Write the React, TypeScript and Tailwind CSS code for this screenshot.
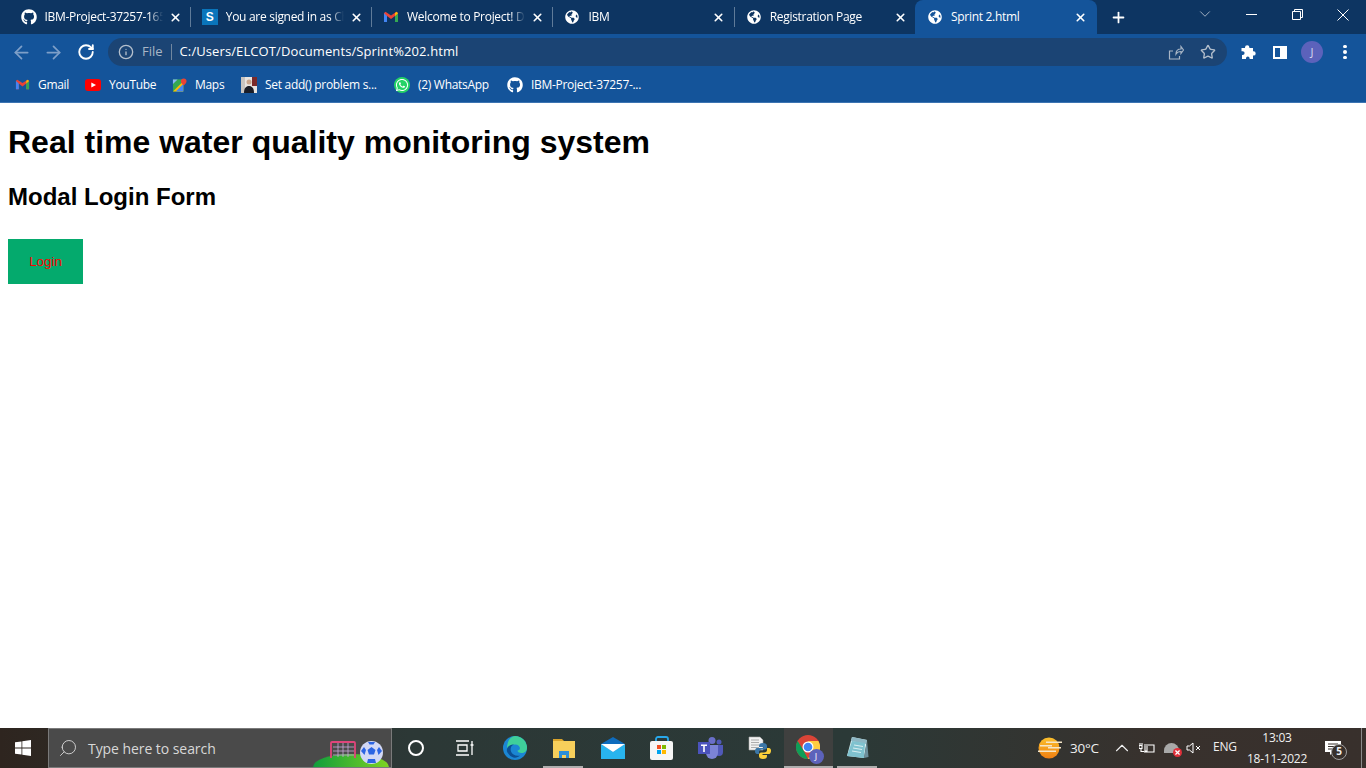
import { ArrowLeft, ArrowRight, RotateCw, Info, Star, Plus, X, ChevronDown, ChevronUp, Search } from "lucide-react";
import { FaGithub, FaWhatsapp, FaGlobeAmericas } from "react-icons/fa";

const uiFont = "[font-family:'Open_Sans','Noto_Sans',sans-serif]";

function GmailIcon({ size = 16 }: { size?: number }) {
  return (
    <svg width={size} height={size} viewBox="0 0 16 16" className="shrink-0">
      <path d="M1 4v9h3V7l4 3 4-3v6h3V4l-1.500-1.200L8 6.500 2.500 2.800z" fill="#ea4335" />
      <path d="M1 4.200V13h3V7z" fill="#4285f4" />
      <path d="M15 4.200V13h-3V7z" fill="#34a853" />
      <path d="M12 7l3-2.800-1.500-1.400L12 4z" fill="#fbbc04" />
    </svg>
  );
}

function StackIcon() {
  return (
    <div className="w-4 h-4 bg-[#0a75bb] flex items-center justify-center text-white text-[12px] font-bold leading-none shrink-0 [font-family:'Liberation_Sans',sans-serif]">
      S
    </div>
  );
}

type TabInfo = { title: string; icon: React.ReactNode };

const tabs: TabInfo[] = [
  { title: "IBM-Project-37257-1659", icon: <FaGithub className="w-4 h-4 text-white" /> },
  { title: "You are signed in as Chan", icon: <StackIcon /> },
  { title: "Welcome to Project! Dash", icon: <GmailIcon /> },
  { title: "IBM", icon: <FaGlobeAmericas className="w-[14px] h-[14px] mx-px text-white" /> },
  { title: "Registration Page", icon: <FaGlobeAmericas className="w-[14px] h-[14px] mx-px text-white" /> },
];

function Tab({ tab, last }: { tab: TabInfo; last?: boolean }) {
  return (
    <div className="w-[181.300px] h-[34px] flex items-center pl-3 text-white relative">
      <div className="w-4 flex justify-center shrink-0">{tab.icon}</div>
      <div className="ml-2 w-[118px] overflow-hidden whitespace-nowrap text-[12px] tracking-[-0.3px] [mask-image:linear-gradient(to_right,black_88%,transparent)]">
        {tab.title}
      </div>
      <X className="w-[13px] h-[13px] ml-[6px] shrink-0" strokeWidth={3} />
      {!last && <div className="absolute -right-px top-[7px] w-px h-5 bg-[#5f7b99]" />}
    </div>
  );
}

function MapsIcon() {
  return (
    <svg width="15" height="16" viewBox="0 0 16 16" className="shrink-0">
      <path d="M1 2h11v13H1z" fill="#34a853" />
      <path d="M1 15L12 4v11z" fill="#fbbc04" />
      <path d="M4 15l8-8v8z" fill="#4285f4" />
      <path d="M1 2h5L1 7z" fill="#8ab4f8" />
      <path d="M12.500 1a3 3 0 0 0-3 3c0 2 3 4.500 3 4.500s3-2.500 3-4.500a3 3 0 0 0-3-3z" fill="#ea4335" />
    </svg>
  );
}

function YoutubeIcon() {
  return (
    <svg width="16" height="12" viewBox="0 0 16 12" className="shrink-0">
      <rect width="16" height="12" rx="3" fill="#f00" />
      <path d="M6.300 3.400L11 6 6.300 8.600z" fill="#fff" />
    </svg>
  );
}

function PhotoIcon() {
  return (
    <svg width="16" height="16" viewBox="0 0 16 16" className="shrink-0">
      <rect width="16" height="16" fill="#e8e4e0" />
      <rect x="11" width="5" height="9" fill="#7a2a2a" />
      <rect width="4" height="16" fill="#c8c4c0" />
      <circle cx="8" cy="5" r="2.500" fill="#c9a58c" />
      <path d="M3 16c0-5 2-7 5-7s5 2 5 7z" fill="#1b1d26" />
    </svg>
  );
}

function WhatsappIcon() {
  return (
    <div className="w-4 h-4 rounded-full bg-[#25d366] flex items-center justify-center shrink-0">
      <FaWhatsapp className="w-[14px] h-[14px] text-white" />
    </div>
  );
}

const bookmarks = [
  { label: "Gmail", icon: <GmailIcon size={15} />, width: "w-[70px]" },
  { label: "YouTube", icon: <YoutubeIcon />, width: "w-[87px]" },
  { label: "Maps", icon: <MapsIcon />, width: "w-[69px]" },
  { label: "Set add() problem s...", icon: <PhotoIcon />, width: "w-[153px]" },
  { label: "(2) WhatsApp", icon: <WhatsappIcon />, width: "w-[113px]" },
  { label: "IBM-Project-37257-...", icon: <FaGithub className="w-4 h-4 text-white shrink-0" />, width: "w-[140px]" },
];

function Chrome() {
  return (
    <div className={uiFont}>
      {/* Tab strip */}
      <div className="h-[34px] bg-[#0d3562] flex pl-[8.500px] items-start">
        {tabs.map((t, i) => (
          <Tab key={t.title} tab={t} last={i === tabs.length - 1} />
        ))}
        <div className="w-[182px] h-[34px] bg-[#14549a] rounded-t-lg flex items-center pl-3 pr-[10px] text-white">
          <FaGlobeAmericas className="w-[14px] h-[14px] mx-px shrink-0" />
          <div className="ml-2 flex-1 text-[12px] tracking-[-0.3px] whitespace-nowrap">Sprint 2.html</div>
          <X className="w-[13px] h-[13px] shrink-0" strokeWidth={3} />
        </div>
        <div className="w-[44px] h-[34px] flex items-center justify-center text-white">
          <Plus className="w-[17px] h-[17px]" strokeWidth={2.500} />
        </div>
        <div className="flex-1 flex justify-end items-start text-white">
          <ChevronDown className="w-[18px] h-[18px] mt-[5px] mr-[14px] opacity-80" strokeWidth={1} />
          <div className="w-[46px] h-[29px] flex items-center justify-center">
            <div className="w-[11px] h-px bg-white" />
          </div>
          <div className="w-[46px] h-[29px] flex items-center justify-center">
            <svg width="11" height="11" viewBox="0 0 11 11" fill="none" stroke="#fff" strokeWidth="1">
              <path d="M.5 2.500h8v8h-8zM2.500 2.500v-2h8v8h-2" />
            </svg>
          </div>
          <div className="w-[46px] h-[29px] flex items-center justify-center">
            <svg width="12" height="12" viewBox="0 0 12 12" stroke="#fff" strokeWidth="1">
              <path d="M.5.5l11 11M11.500.5l-11 11" />
            </svg>
          </div>
        </div>
      </div>

      {/* Toolbar */}
      <div className="h-9 bg-[#14549a] flex items-center text-white">
        <div className="w-[108px] flex items-center">
          <ArrowLeft className="w-[21px] h-[21px] ml-[11px] text-[#7e9fc8]" strokeWidth={2} />
          <ArrowRight className="w-[21px] h-[21px] ml-[11px] text-[#7e9fc8]" strokeWidth={2} />
          <RotateCw className="w-[18px] h-[18px] ml-[13px]" strokeWidth={2.500} />
        </div>
        <div className="w-[1119px] h-7 rounded-full bg-[#1b4474] flex items-center text-[13px]">
          <Info className="w-4 h-4 ml-[10px] text-[#b4bfcc]" strokeWidth={2} />
          <span className="ml-2 text-[#a9b6c6]">File</span>
          <div className="w-px h-[16px] bg-[#71879f] ml-2" />
          <span className="ml-2 tracking-[0.1px] flex-1 whitespace-nowrap">C:/Users/ELCOT/Documents/Sprint%202.html</span>
          <svg width="16" height="16" viewBox="0 0 16 16" fill="none" stroke="#a9b6c6" strokeWidth="1.200" className="mr-4">
            <path d="M5 7H1.500v8h10v-3M8 10c0-3 2-5 5-5V2.500L15.500 6 13 9.500V7.500c-2 0-4 .8-5 2.500z" />
          </svg>
          <Star className="w-4 h-4 mr-[11px] text-[#b4bfcc]" strokeWidth={2} />
        </div>
        <svg width="16" height="16" viewBox="0 0 16 16" fill="#fff" className="ml-[13px]">
          <path d="M5 3.500a2.200 2.200 0 0 1 4.400 0V4h3.600v3.200h.5a2.200 2.200 0 0 1 0 4.400H13V15H9.600v-.8a1.800 1.800 0 0 0-3.600 0v.8H2v-4h.7a1.900 1.900 0 0 0 0-3.800H1.500V4H5z" />
        </svg>
        <div className="w-[14px] h-[13px] border-2 border-white ml-[17px] flex justify-end">
          <div className="w-[5px] h-full bg-white" />
        </div>
        <div className="w-[22px] h-[22px] rounded-full bg-[#5c62bb] ml-[14px] flex items-center justify-center text-[11px] text-[#d8daf0]">J</div>
        <div className="ml-[20px] flex flex-col gap-[2px]">
          <div className="w-[3.500px] h-[3.500px] rounded-full bg-white" />
          <div className="w-[3.500px] h-[3.500px] rounded-full bg-white" />
          <div className="w-[3.500px] h-[3.500px] rounded-full bg-white" />
        </div>
      </div>

      {/* Bookmarks */}
      <div className="h-[33px] bg-[#14549a] border-b border-[#3c74b2] flex items-center pl-[15px] pb-[3px] text-white text-[12px] tracking-[-0.3px]">
        {bookmarks.map((b) => (
          <div key={b.label} className={`${b.width} flex items-center gap-2 whitespace-nowrap`}>
            {b.icon}
            <span>{b.label}</span>
          </div>
        ))}
      </div>
    </div>
  );
}

function EdgeIcon() {
  return (
    <svg width="24" height="24" viewBox="0 0 24 24">
      <circle cx="12" cy="12" r="12" fill="#1b86d3" />
      <path d="M12 0a12 12 0 0 1 12 12c0 3-2.500 5-5.500 5-2.500 0-4-1-4-2.500 4 0 3-6-2.500-6-3 0-6 1.500-8 4C4 5 7.500 0 12 0z" fill="#3fcf9a" />
      <path d="M4 13c1-3 4-5 7-4.500-3 1-4 4-3 7 1 3 5 5 9 4-3 3-8 3-11-1-2-2-2.500-3.500-2-5.500z" fill="#0c4f93" />
    </svg>
  );
}

function ExplorerIcon() {
  return (
    <svg width="22" height="20" viewBox="0 0 22 20">
      <path d="M0 1h9l2 2h-11z" fill="#d9a32b" />
      <rect y="3" width="22" height="17" fill="#f7cf5b" />
      <path d="M6 20v-7h10v7h-3v-3H9v3z" fill="#2c8fd8" />
    </svg>
  );
}

function MailIcon() {
  return (
    <svg width="24" height="22" viewBox="0 0 24 22">
      <path d="M12 0l12 7v15H0V7z" fill="#0f6cbd" />
      <path d="M0 7l12 8 12-8v15H0z" fill="#28b4ee" />
      <path d="M0 7h24l-12 8z" fill="#fff" />
    </svg>
  );
}

function StoreIcon() {
  return (
    <svg width="24" height="24" viewBox="0 0 24 24">
      <path d="M6 6V3a2 2 0 0 1 2-2h8a2 2 0 0 1 2 2v3" fill="none" stroke="#28a8ea" strokeWidth="1.800" />
      <rect y="5" width="23" height="19" rx="2" fill="#f6f6f6" />
      <rect x="7" y="9" width="4" height="4" fill="#f25022" />
      <rect x="12" y="9" width="4" height="4" fill="#7fba00" />
      <rect x="7" y="14" width="4" height="4" fill="#00a4ef" />
      <rect x="12" y="14" width="4" height="4" fill="#ffb900" />
    </svg>
  );
}

function TeamsIcon() {
  return (
    <svg width="25" height="22" viewBox="0 0 25 22">
      <circle cx="14" cy="3.500" r="3.500" fill="#6a6fc9" />
      <circle cx="21" cy="5" r="2.500" fill="#5059b8" />
      <path d="M17 8h8v7a4 4 0 0 1-8 0z" fill="#5059b8" />
      <path d="M8 8h12v8a6 6 0 0 1-12 0z" fill="#7b83d6" />
      <rect y="5" width="12" height="12" fill="#4b53bc" />
      <path d="M3 7.500h6v1.500H6.800v6H5.200V9H3z" fill="#fff" />
    </svg>
  );
}

function PythonIcon() {
  return (
    <svg width="24" height="24" viewBox="0 0 24 24">
      <path d="M1 1h11l3 3v10H1z" fill="#f2f2f2" stroke="#a8a8a8" strokeWidth="0.600" />
      <path d="M3 4h8M3 6.500h8M3 9h8M3 11.500h8" stroke="#9a9a9a" strokeWidth="0.800" />
      <path d="M15 7c-3 0-4 1-4 3v1h4.500v1H9c-1.500 0-2 2-2 3.500S8 18 9 18h2v-2c0-1.500 1-2.500 3-2.500h3c1 0 2-1 2-2V10c0-2-1.500-3-4-3z" fill="#3b77a8" />
      <path d="M15 23c3 0 4-1 4-3v-1h-4.500v-1H21c1.500 0 2-2 2-3.500S22 12 21 12h-2v2c0 1.500-1 2.500-3 2.500h-3c-1 0-2 1-2 2V20c0 2 1.500 3 4 3z" fill="#fdd13a" />
    </svg>
  );
}

function ChromeIcon() {
  return (
    <div className="relative w-[26px] h-[26px]">
      <svg width="24" height="24" viewBox="0 0 24 24">
        <circle cx="12" cy="12" r="12" fill="#db4437" />
        <path d="M12 24A12 12 0 0 1 1.600 6L7 14.500l5 9.500z" fill="#0f9d58" />
        <path d="M12 24a12 12 0 0 0 10.400-18H12l4.500 8z" fill="#ffcd40" />
        <circle cx="12" cy="12" r="5.500" fill="#fff" />
        <circle cx="12" cy="12" r="4.300" fill="#4285f4" />
      </svg>
      <div className="absolute -right-[2px] -bottom-[3px] w-[15px] h-[15px] rounded-full bg-[#5c62bb] text-[9px] text-white flex items-center justify-center">J</div>
    </div>
  );
}

function NotepadIcon() {
  return (
    <svg width="24" height="24" viewBox="0 0 24 24">
      <path d="M6 1l15 3-3 18-17-2z" fill="#d8eef0" />
      <path d="M6 1l15 3-1 4-15-3z" fill="#8eb7c4" />
      <path d="M1 20L6 5l13 2-1 15z" fill="#7fc2cf" />
      <path d="M8 9l9 1.500M7 12l9 1.500M6 15l9 1.500" stroke="#f0fafa" strokeWidth="0.800" />
      <path d="M18 22l3-18 1.500 17z" fill="#6d8f9c" />
    </svg>
  );
}

function WeatherIcon() {
  return (
    <svg width="24" height="22" viewBox="0 0 24 22" className="mr-2 shrink-0">
      <defs>
        <linearGradient id="sun" x1="0" y1="0" x2="0" y2="1">
          <stop offset="0" stopColor="#fbc02d" />
          <stop offset="1" stopColor="#ef7f12" />
        </linearGradient>
      </defs>
      <circle cx="11" cy="11" r="10.500" fill="url(#sun)" />
      <path d="M8 4.500h16v1.500H8zM2 8h12v1.500H2zM10 10h13v1.500H10zM0 13.500h18v1.500H0z" fill="#f5e6c8" />
    </svg>
  );
}

function Taskbar() {
  const itemCls = "w-[49px] h-10 flex items-center justify-center relative";
  return (
    <div className={`h-10 flex items-stretch text-white ${uiFont} bg-[linear-gradient(to_right,#2e251f_0%,#2c3836_30%,#2b3937_62%,#38312d_85%,#38302c_100%)]`}>
      <div className="w-12 flex items-center justify-center pr-[2px]">
        <svg width="16" height="16" viewBox="0 0 16 16" fill="#fff">
          <path d="M0 2.300l6.500-.9v6.200H0zM7.300 1.300L16 0v7.600H7.300zM0 8.400h6.500v6.200L0 13.700zM7.300 8.400H16V16l-8.700-1.200z" />
        </svg>
      </div>
      <div className="w-[344px] bg-[#4a4a4a] border border-[#7a7a7a] relative overflow-hidden flex items-center text-[14px] text-[#d8d8d8]">
        <Search className="w-5 h-5 ml-[9px] -scale-x-100" strokeWidth={1.100} />
        <span className="ml-[10px] tracking-[-0.06px]">Type here to search</span>
        {/* Search highlight doodle */}
        <div className="absolute left-[264px] -bottom-[13px] w-[76px] h-[26px] rounded-[50%] bg-[linear-gradient(to_right,#0f9d3c,#7ed321)]" />
        <svg width="26" height="18" viewBox="0 0 26 18" fill="none" className="absolute left-[281px] top-[12px]">
          <path d="M1 17V2q0-1 1-1h22q1 0 1 1v15" stroke="#e0457b" strokeWidth="1.800" />
          <path d="M3 6h21M3 10h21M3 14h21M8 2v14M13 2v14M18 2v14" stroke="#c9a8d8" strokeWidth="0.800" />
        </svg>
        <svg width="23" height="23" viewBox="0 0 23 23" className="absolute left-[311px] top-[12px]">
          <circle cx="11.500" cy="11.500" r="11.500" fill="#d3d8f5" />
          <path d="M11.500 6l4 3-1.500 4.500H9L7.500 9zM1 10l3-4 2 3-1.500 5zM22 10l-3-4-2 3 1.500 5zM8 1h7l-1.500 2.500h-4zM7 22l1-4h7l1 4z" fill="#2c64e3" />
        </svg>
      </div>
      <div className={`${itemCls} pr-[2px]`}>
        <div className="w-4 h-4 rounded-full border-2 border-white" />
      </div>
      <div className={`${itemCls} pr-[2px]`}>
        <svg width="18" height="16" viewBox="0 0 18 16" fill="none" stroke="#fff" strokeWidth="1.300">
          <path d="M0 1h13M2 5h9v6H2zM0 15h13M16 1v14M14.500 5h3" />
        </svg>
      </div>
      <div className={itemCls}><EdgeIcon /></div>
      <div className={itemCls}>
        <ExplorerIcon />
        <div className="absolute bottom-0 left-[4px] w-10 h-[2px] bg-[#aeaeae]" />
      </div>
      <div className={itemCls}><MailIcon /></div>
      <div className={itemCls}><StoreIcon /></div>
      <div className={itemCls}><TeamsIcon /></div>
      <div className={itemCls}><PythonIcon /></div>
      <div className={`${itemCls} bg-[#3f403f]`}>
        <ChromeIcon />
        <div className="absolute bottom-0 inset-x-0 h-[2px] bg-[#aeaeae]" />
      </div>
      <div className={itemCls}>
        <NotepadIcon />
        <div className="absolute bottom-0 left-[4px] w-10 h-[2px] bg-[#aeaeae]" />
      </div>

      {/* Tray */}
      <div className="flex-1 flex items-center justify-end text-[#f0f0f0]">
        <WeatherIcon />
        <span className="text-[13.500px] w-[41px] shrink-0 tracking-[-0.2px]">30°C</span>
        <ChevronUp className="w-[22px] h-[22px] mr-[6px] shrink-0" strokeWidth={1.200} />
        <svg width="16" height="12" viewBox="0 0 16 12" fill="none" stroke="#fff" strokeWidth="1.100" className="mr-[9px] shrink-0">
          <path d="M5 3h10v7H5M0 3.500h3v3H0zM1 1v2.500M3 1v2.500M2 6.500v3h3M6 4v5h2V4" />
        </svg>
        <div className="relative w-[15px] h-[10px] rounded-t-full bg-[#a8a8a8] mr-[7px] shrink-0">
          <div className="absolute -right-[3px] -bottom-[4px] w-[9px] h-[9px] rounded-full bg-[#e0303a] flex items-center justify-center">
            <X className="w-[7px] h-[7px] text-white" strokeWidth={4} />
          </div>
        </div>
        <svg width="16" height="12" viewBox="0 0 16 12" fill="none" stroke="#fff" strokeWidth="1" className="mr-[11px] shrink-0">
          <path d="M1 4h2.500L7 1v10L3.500 8H1zM10 4l4 4M14 4l-4 4" />
        </svg>
        <span className="text-[12px] w-[34px] shrink-0 tracking-[-0.2px] -mt-[2px]">ENG</span>
        <div className="w-[60px] shrink-0 flex flex-col items-center text-[12px] leading-[21px] tracking-[-0.25px] whitespace-nowrap">
          <span>13:03</span>
          <span>18-11-2022</span>
        </div>
        <div className="w-[54px] shrink-0 flex justify-center relative pr-[2px]">
          <svg width="16" height="15" viewBox="0 0 16 15" fill="#fff">
            <path d="M0 0h16v11H8l-3 3v-3H0z" />
            <path d="M3 3h10M3 5.500h10M3 8h10" stroke="#38302c" strokeWidth="1" />
          </svg>
          <div className="absolute left-[24px] top-[3px] w-4 h-4 rounded-full border border-[#a0a0a0] bg-[#38302c] text-[10px] font-bold flex items-center justify-center">5</div>
        </div>
        <div className="w-[5px] h-full border-l border-[#8a8a8a] shrink-0" />
      </div>
    </div>
  );
}

export default function App() {
  return (
    <div className="h-screen flex flex-col overflow-hidden bg-white">
      <Chrome />
      <main className="flex-1 px-2 text-black [font-family:'Liberation_Sans',Arial,sans-serif]">
        <h1 className="text-[32px] font-bold leading-[37px] mt-[21px]">Real time water quality monitoring system</h1>
        <h2 className="text-[24px] font-bold leading-[28px] mt-[22px]">Modal Login Form</h2>
        <button className="w-[75px] h-[45px] bg-[#04aa6d] text-[#ff0000] text-[13.333px] mt-[28px] flex items-center justify-center">
          Login
        </button>
      </main>
      <Taskbar />
    </div>
  );
}
